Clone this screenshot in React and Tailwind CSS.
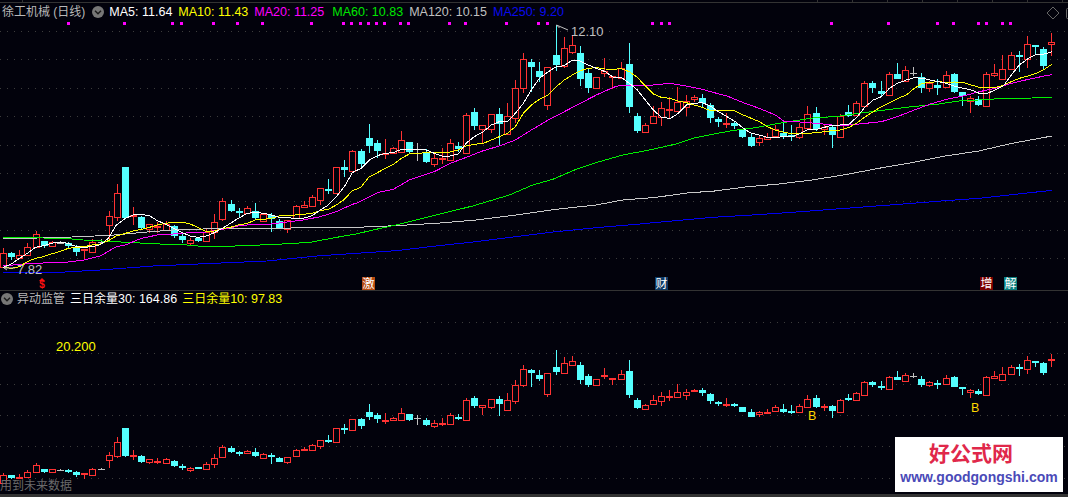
const RED = "#ff3232";
const CYAN = "#54ffff";
const GREY = "#c0c0c0";

// candles: [bodyTop, bodyBottom, high, low, colour], y in px of the upper panel
const R = RED;
const C = CYAN;
const G = GREY;
const candles = [
  [253, 267, 248, 268, R], [253, 257, 252, 260, C], [255, 258, 250, 258, R], [247, 255, 243, 255, R],
  [234, 247, 231, 247, R], [241, 246, 241, 248, C], [242, 246, 241, 247, R], [243, 243, 241, 244, G],
  [243, 246, 242, 249, C], [247, 252, 245, 256, C], [249, 250, 249, 260, R], [242, 252, 239, 252, R],
  [242, 242, 239, 244, G], [216, 225, 211, 240, R], [193, 217, 184, 221, R], [167, 218, 167, 219, C],
  [215, 216, 207, 225, R], [217, 228, 216, 230, C], [224, 229, 224, 233, R], [226, 227, 222, 233, R],
  [224, 230, 221, 230, R], [226, 236, 225, 238, C], [236, 240, 233, 243, C], [240, 243, 238, 246, R],
  [238, 241, 237, 242, C], [232, 241, 229, 241, R], [222, 232, 214, 239, R], [201, 219, 198, 221, R],
  [204, 211, 200, 212, C], [211, 213, 208, 217, C], [208, 213, 206, 214, R], [211, 218, 203, 219, C],
  [214, 221, 213, 221, R], [215, 219, 213, 232, C], [221, 228, 219, 229, C], [220, 229, 220, 233, R],
  [206, 218, 205, 219, R], [205, 207, 201, 207, R], [197, 206, 195, 207, R], [188, 200, 188, 205, R],
  [189, 191, 179, 194, C], [167, 193, 167, 194, R], [167, 170, 160, 177, C], [151, 171, 150, 171, R],
  [151, 164, 149, 168, C], [138, 146, 124, 153, C], [143, 151, 140, 158, C], [153, 153, 139, 159, R],
  [148, 153, 147, 153, R], [140, 152, 131, 152, R], [142, 152, 142, 154, C], [149, 149, 143, 161, G],
  [152, 162, 149, 163, C], [158, 164, 153, 167, R], [158, 159, 148, 164, R], [143, 160, 139, 160, R],
  [146, 149, 142, 152, C], [115, 153, 113, 153, R], [112, 126, 108, 130, C], [125, 129, 125, 143, R],
  [114, 129, 114, 133, R], [114, 124, 108, 145, C], [116, 134, 103, 135, R], [88, 118, 80, 123, R],
  [59, 88, 53, 93, R], [62, 67, 59, 92, C], [71, 77, 62, 82, C], [67, 105, 67, 110, R],
  [55, 65, 25, 71, C], [48, 66, 37, 68, R], [45, 52, 35, 54, R], [53, 79, 46, 86, C],
  [73, 88, 68, 93, C], [77, 88, 77, 88, R], [71, 73, 58, 77, R], [76, 77, 76, 89, R],
  [68, 78, 62, 79, R], [64, 107, 43, 113, C], [116, 131, 113, 133, C], [125, 132, 123, 133, R],
  [116, 123, 106, 123, R], [108, 117, 102, 126, R], [109, 109, 97, 118, R], [102, 111, 87, 111, R],
  [101, 107, 95, 116, R], [97, 99, 95, 102, R], [98, 103, 94, 108, C], [105, 118, 103, 123, C],
  [119, 122, 117, 127, C], [123, 123, 113, 128, R], [123, 126, 121, 129, C], [129, 137, 129, 138, C],
  [137, 146, 133, 147, C], [138, 142, 135, 146, R], [137, 139, 133, 140, R], [129, 136, 125, 137, R],
  [133, 137, 123, 139, C], [135, 136, 125, 141, C], [127, 137, 123, 139, R], [114, 128, 106, 130, R],
  [113, 129, 107, 131, C], [127, 129, 124, 135, R], [127, 135, 125, 148, C], [116, 137, 114, 138, R],
  [112, 116, 105, 117, C], [103, 115, 101, 116, R], [83, 106, 81, 106, R], [83, 88, 81, 93, C],
  [91, 94, 81, 97, C], [74, 95, 72, 96, R], [74, 79, 63, 79, C], [70, 81, 66, 81, R],
  [73, 73, 67, 76, G], [77, 88, 73, 93, C], [83, 88, 81, 92, R], [85, 88, 79, 95, C],
  [75, 87, 71, 87, R], [74, 92, 73, 93, C], [92, 96, 92, 106, C], [98, 101, 96, 113, R],
  [99, 105, 96, 106, C], [74, 106, 72, 106, R], [73, 75, 64, 77, R], [69, 79, 55, 79, R],
  [55, 69, 52, 70, R], [55, 57, 51, 72, C], [44, 59, 36, 68, R], [45, 46, 45, 55, C],
  [49, 66, 47, 70, C], [42, 44, 33, 56, R],
];

// moving averages are read off in 3x crops: x0, y0 is the crop origin
const seg = (x0, y0, pts) => pts.map(([x, y]) => [x0 + x / 3, y0 + y / 3]);

const ma5 = [
  ...seg(0, 150, [[10, 352], [34, 342], [58, 325], [82, 310], [106, 292], [130, 287], [154, 280], [178, 276], [205, 280], [229, 290], [253, 292], [277, 290], [301, 284], [325, 265], [349, 225], [376, 205], [400, 195], [424, 193], [448, 197], [472, 212], [496, 222], [520, 235], [547, 248], [571, 258], [595, 262], [619, 258], [643, 248], [667, 235], [691, 220], [715, 205], [742, 190], [766, 187], [790, 190], [814, 195], [838, 202], [862, 203], [886, 205], [910, 205], [937, 197], [961, 180], [985, 165], [1009, 140], [1033, 110], [1057, 68]]),
  ...seg(356, 130, [[0, 122], [16, 115], [40, 90], [64, 77], [88, 70], [112, 68], [136, 58], [160, 60], [184, 58], [211, 60], [235, 70], [259, 78], [283, 78], [307, 72]]),
  ...seg(356, 0, [[330, 430], [355, 410], [382, 395], [406, 375], [430, 365], [454, 365], [478, 340], [502, 310], [526, 270], [550, 235], [577, 215], [601, 200], [625, 197], [649, 180], [673, 183], [697, 195], [721, 205], [748, 215], [772, 232], [796, 232], [820, 250], [844, 270], [868, 300], [892, 330], [916, 352], [943, 355], [967, 340], [991, 315], [1015, 310], [1039, 308], [1063, 318]]),
  ...seg(712, 0, [[19, 335], [45, 350], [70, 365], [94, 385], [118, 400], [142, 405], [166, 412], [190, 412], [217, 410], [241, 410], [265, 400], [289, 388], [313, 388], [337, 382], [361, 375], [385, 375], [412, 372], [436, 350], [460, 320], [484, 300], [508, 290], [532, 265], [556, 250], [583, 240], [607, 233], [631, 235], [655, 240], [679, 245], [703, 250], [727, 258], [754, 265], [778, 270], [802, 280], [826, 280], [850, 270], [874, 258], [898, 225], [922, 195], [949, 175], [973, 163], [997, 162], [1021, 155]]),
];

const ma10 = [
  ...seg(0, 150, [[10, 352], [34, 355], [58, 350], [82, 335], [106, 325], [130, 320], [154, 312], [178, 305], [205, 295], [229, 292], [253, 290], [277, 285], [301, 282], [325, 272], [349, 258], [376, 250], [400, 243], [424, 238], [448, 232], [472, 225], [496, 220], [520, 217], [547, 217], [571, 222], [595, 233], [619, 245], [643, 243], [667, 236], [691, 232], [715, 225], [742, 220], [766, 210], [790, 208], [814, 205], [838, 198], [862, 197], [886, 195], [910, 193], [937, 190], [961, 182], [985, 178], [1009, 165], [1033, 148], [1057, 122]]),
  ...seg(356, 130, [[0, 178], [16, 170], [40, 140], [64, 128], [88, 115], [112, 103], [136, 85], [160, 72], [184, 70], [211, 68], [235, 67], [259, 68], [283, 66], [307, 60], [331, 48], [355, 43], [382, 40], [406, 30], [430, 20]]),
  ...seg(356, 0, [[454, 400], [478, 380], [502, 340], [526, 315], [550, 298], [577, 285], [601, 260], [625, 240], [649, 225], [673, 212], [697, 205], [721, 203], [748, 207], [772, 208], [796, 206], [820, 215], [844, 232], [868, 258], [892, 282], [916, 292], [943, 295], [967, 303], [991, 308], [1015, 315], [1039, 322], [1063, 332]]),
  ...seg(712, 0, [[45, 332], [70, 333], [94, 345], [118, 355], [142, 365], [166, 380], [190, 390], [217, 397], [241, 402], [265, 400], [289, 400], [313, 398], [337, 395], [361, 392], [385, 390], [412, 382], [436, 368], [460, 350], [484, 335], [508, 320], [532, 308], [556, 296], [583, 285], [607, 265], [631, 250], [655, 247], [679, 245], [703, 247], [727, 246], [754, 247], [778, 255], [802, 262], [826, 262], [850, 262], [874, 256], [898, 245], [922, 235], [949, 228], [973, 220], [997, 208], [1021, 192]]),
];

const ma20 = [
  ...seg(0, 150, [[10, 348], [58, 343], [106, 340], [154, 338], [205, 336], [253, 330], [301, 318], [349, 290], [376, 285], [424, 265], [472, 255], [520, 252], [571, 248], [619, 246], [667, 238], [715, 228], [766, 222], [814, 222], [862, 216], [910, 210], [961, 200], [1009, 185], [1057, 163]]),
  ...seg(356, 130, [[0, 220], [64, 188], [112, 178], [160, 150], [235, 125], [283, 100], [331, 82], [382, 62], [430, 48], [478, 30]]),
  ...seg(356, 0, [[526, 390], [577, 360], [625, 335], [673, 310], [721, 285], [772, 262], [796, 255], [844, 255], [892, 255], [940, 250], [991, 258], [1039, 268], [1063, 275]]),
  ...seg(712, 0, [[45, 288], [94, 308], [142, 325], [190, 345], [217, 365], [265, 366], [313, 370], [361, 375], [412, 375], [460, 370], [508, 365], [556, 350], [607, 330], [655, 312], [703, 298], [754, 288], [802, 275], [850, 265], [898, 250], [949, 238], [997, 228], [1021, 224]]),
];

const ma60 = [
  ...seg(0, 150, [[10, 263], [130, 264], [215, 267], [250, 270], [325, 274], [400, 278], [480, 282], [560, 285], [630, 291], [730, 287], [830, 283], [930, 277], [1010, 262]]),
  ...seg(356, 130, [[0, 312], [60, 298], [120, 285], [240, 255], [350, 228], [460, 195], [530, 165], [590, 148], [660, 118], [720, 98], [800, 75], [880, 60], [960, 42], [1010, 25]]),
  ...seg(712, 0, [[0, 403], [60, 392], [130, 383], [190, 372], [250, 362], [310, 353], [370, 350], [440, 340], [520, 330], [600, 320], [680, 312], [740, 303], [800, 300], [860, 296], [960, 294], [1020, 293]]),
];

const ma120 = [
  ...seg(0, 150, [[10, 267], [215, 261], [330, 256], [440, 246], [520, 240], [640, 236], [800, 236], [950, 232]]),
  ...seg(356, 130, [[0, 292], [120, 287], [240, 280], [360, 270], [480, 255], [600, 238], [720, 225], [800, 210], [900, 202], [1000, 188]]),
  ...seg(712, 130, [[0, 184], [100, 171], [200, 162], [300, 150], [400, 134], [500, 115], [600, 98], [700, 78], [800, 63], [900, 40], [1020, 18]]),
];

const ma250 = [
  ...seg(0, 150, [[10, 369], [160, 368], [300, 360], [460, 348], [640, 340], [800, 333], [950, 318]]),
  ...seg(356, 130, [[0, 370], [120, 362], [240, 348], [360, 335], [480, 320], [600, 305], [720, 293], [840, 283], [960, 272]]),
  ...seg(712, 130, [[0, 262], [120, 255], [240, 247], [360, 238], [480, 229], [600, 220], [700, 212], [800, 205], [900, 194], [1020, 181]]),
];

const lines = [
  [ma250, "#0000f0"],
  [ma120, "#c8c8c8"],
  [ma60, "#00f000"],
  [ma20, "#ff00ff"],
  [ma10, "#ffff00"],
  [ma5, "#ffffff"],
];

const dots = [
  ...[203, 373, 517, 544, 640, 712, 787, 934, 1030, 1054].map((x) => x / 3),
  ...[13, 37, 61, 85, 133, 157, 280, 328, 451, 547, 574, 889, 916, 940].map((x) => 356 + x / 3),
  ...[358, 529, 676, 724, 799, 823, 871, 895].map((x) => 712 + x / 3),
];

const candleX = (i) => Math.round(3 + i * 8.125) + 0.5;

function Candles({ mapY }) {
  return candles.map(([top, bottom, high, low, color], i) => {
    const x = candleX(i);
    const t = Math.round(mapY(top));
    const b = Math.round(mapY(bottom));
    const hi = Math.round(mapY(high));
    const lo = Math.round(mapY(low));
    const flat = b - t < 2;
    const hollow = color === RED && !flat;
    return (
      <g key={i} shapeRendering="crispEdges">
        <line x1={x} x2={x} y1={hi} y2={t} stroke={color} />
        <line x1={x} x2={x} y1={b} y2={lo} stroke={color} />
        {flat ? (
          <rect x={x - 3.5} y={t} width={7} height={color === GREY ? 1 : 2} fill={color} />
        ) : hollow ? (
          <rect x={x - 3} y={t + 0.5} width={6} height={b - t} fill="#02020c" stroke={color} />
        ) : (
          <rect x={x - 3.5} y={t} width={7} height={b - t} fill={color} />
        )}
      </g>
    );
  });
}

function GridLines({ ys }) {
  return ys.map((y) => (
    <line key={y} x1={0} x2={1068} y1={y + 0.5} y2={y + 0.5} stroke="#3c3c3c" strokeDasharray="1 6" shapeRendering="crispEdges" />
  ));
}

function ChevronDot() {
  return (
    <svg viewBox="0 0 12 12" className="w-[12px] h-[12px] shrink-0">
      <circle cx="6" cy="6" r="6" fill="#777777" />
      <path d="M3 4.8 L6 7.8 L9 4.8" fill="none" stroke="#1a1a1a" strokeWidth="1.4" />
    </svg>
  );
}

function Tag({ className, children }) {
  return (
    <span className={"absolute top-[277px] w-[13px] h-[13px] flex items-center justify-center text-[12px] leading-none text-white " + className}>
      {children}
    </span>
  );
}

export default function App() {
  return (
    <div className="w-[1068px] h-[497px] bg-[#02020c] overflow-hidden flex flex-col font-['Liberation_Sans','Noto_Sans_CJK_SC',sans-serif] text-[12.5px] leading-none">
      {/* kline panel */}
      <div className="relative h-[291px] shrink-0 border-b border-[#333333]">
        <svg className="absolute inset-0" width="1068" height="290">
          <line x1="0" x2="1068" y1="2.5" y2="2.5" stroke="#333333" shapeRendering="crispEdges" />
          {[22, 817, 852, 887, 922, 957, 992, 1027, 1062].map((x) => (
            <line key={x} x1={x + 0.5} x2={x + 0.5} y1="0" y2="2" stroke="#333333" shapeRendering="crispEdges" />
          ))}
          <GridLines ys={[31, 59, 88, 116, 145, 173, 201, 230, 258]} />
          {dots.map((x) => (
            <rect key={x} x={Math.round(x) - 1.5} y="22" width="3" height="3" fill="#ff00ff" shapeRendering="crispEdges" />
          ))}
          <Candles mapY={(y) => y} />
          {lines.map(([pts, color]) => (
            <polyline key={color} points={pts.map((p) => p.join(",")).join(" ")} fill="none" stroke={color} strokeWidth="1" shapeRendering="crispEdges" />
          ))}
          {/* high and low pointers */}
          <path d="M556.5 25 L568 30 M556.5 25 L559.5 28" fill="none" stroke="#c0c0c0" strokeWidth="1" />
          <path d="M4 268 H15 M4 268 L7 266 M4 268 L7 270" fill="none" stroke="#c0c0c0" strokeWidth="1" />
          <path d="M1047 13 L1053 7 L1059 13 L1053 19 Z" fill="none" stroke="#666666" strokeWidth="1" />
          <rect x="1066.5" y="8.5" width="6" height="10" rx="1" fill="none" stroke="#666666" />
        </svg>

        <div className="relative flex items-center h-[24px] pl-[2px]">
          <span className="text-[12px] text-[#b8b8b8] mr-[7px]">徐工机械 (日线)</span>
          <ChevronDot />
          <div className="flex ml-[5px] gap-[6px]">
            <span className="text-white">MA5: 11.64</span>
            <span className="text-[#ffff00]">MA10: 11.43</span>
            <span className="text-[#ff00ff] mr-[2px]">MA20: 11.25</span>
            <span className="text-[#00e600]">MA60: 10.83</span>
            <span className="text-[#c0c0c0]">MA120: 10.15</span>
            <span className="text-[#0a0aee]">MA250: 9.20</span>
          </div>
        </div>

        <span className="absolute left-[571px] top-[25px] text-[13px] text-[#c0c0c0]">12.10</span>
        <span className="absolute left-[17px] top-[263px] text-[13px] text-[#c0c0c0]">7.82</span>

        <span className="absolute left-[37px] top-[278px] w-[10px] flex flex-col items-center text-[#ff1010] font-bold text-[10px] leading-[8px]">
          <span className="w-0 h-0 border-x-[3px] border-x-transparent border-b-[3px] border-b-[#ff1010]" />
          <span>$</span>
        </span>
        <Tag className="left-[362px] bg-[#b84a10]">激</Tag>
        <Tag className="left-[655px] bg-[#0e3a66]">财</Tag>
        <Tag className="left-[980px] bg-[#7a0000]">增</Tag>
        <Tag className="left-[1004px] bg-[#0a7f80]">解</Tag>
      </div>

      {/* indicator panel */}
      <div className="relative flex-1 border-b-[3px] border-[#333333]">
        <svg className="absolute inset-0" width="1068" height="203">
          <GridLines ys={[31, 62, 93, 124, 155, 187]} />
          <Candles mapY={(y) => 59 + (y - 25) * 0.55} />
        </svg>

        <div className="relative flex items-center h-[16px] pl-[1px]">
          <ChevronDot />
          <span className="text-[12px] text-[#b8b8b8] ml-[4px]">异动监管</span>
          <span className="text-white ml-[5px]"><span className="text-[12px]">三日余量</span>30: 164.86</span>
          <span className="text-[#ffff00] ml-[5px]"><span className="text-[12px]">三日余量</span>10: 97.83</span>
        </div>

        <span className="absolute left-[56px] top-[49px] text-[13px] text-[#ffff00]">20.200</span>
        <span className="absolute left-[808px] top-[119px] text-[#ffd800]">B</span>
        <span className="absolute left-[971px] top-[111px] text-[#ffd800]">B</span>
        <span className="absolute left-0 top-[189px] text-[12px] text-[#6a6a6a]">用到未来数据</span>

        <div className="absolute left-[895px] top-[146px] w-[168px] h-[55px] bg-white flex flex-col items-center">
          <span className="mt-[5px] mr-[16px] text-[21px] font-bold leading-[24px] text-[#e0284a]">好公式网</span>
          <span className="mt-[4px] text-[14px] font-bold leading-[14px] text-[#4a4ab8]">www.goodgongshi.com</span>
        </div>
      </div>
    </div>
  );
}
